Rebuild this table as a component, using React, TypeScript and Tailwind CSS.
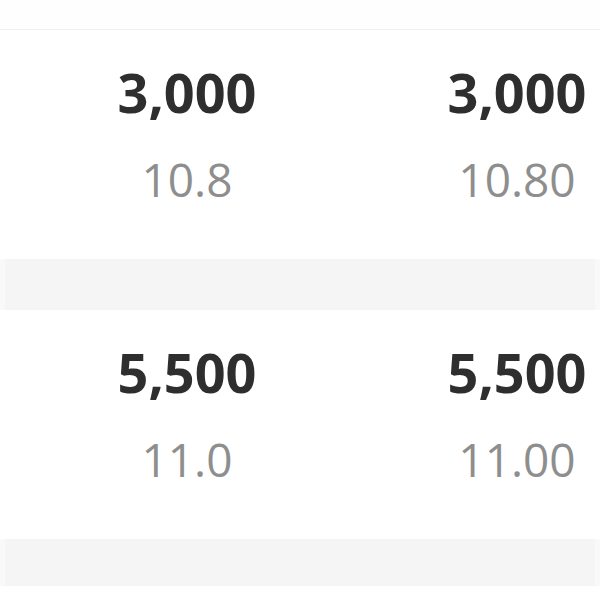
const rows = [
  { cells: [{ price: "3,000", rate: "10.8" }, { price: "3,000", rate: "10.80" }], gap: "h-[51px]" },
  { cells: [{ price: "5,500", rate: "11.0" }, { price: "5,500", rate: "11.00" }], gap: "h-[47px]" },
];

export default function App() {
  return (
    <div
      className="h-[600px] w-[600px] overflow-hidden bg-white"
      style={{ fontFamily: '"Open Sans", "Noto Sans", sans-serif' }}
    >
      <div className="h-[30px] border-b border-[#efefef] bg-[#fefefe]" />
      {rows.map((row, i) => (
        <div key={i}>
          <div className="flex h-[229px] pl-[22px]">
            {row.cells.map((c, j) => (
              <div key={j} className="flex w-[330px] shrink-0 flex-col items-center pt-[35px]">
                <div className="text-[54px] font-bold leading-[54px] text-[#2e2e2e]">{c.price}</div>
                <div className="mt-[37px] text-[46px] leading-[46px] text-[#8e8e8e]">{c.rate}</div>
              </div>
            ))}
          </div>
          <div className={`${row.gap} border-x-[5px] border-[#f9f9f9] bg-[#f5f5f5]`} />
        </div>
      ))}
    </div>
  );
}
